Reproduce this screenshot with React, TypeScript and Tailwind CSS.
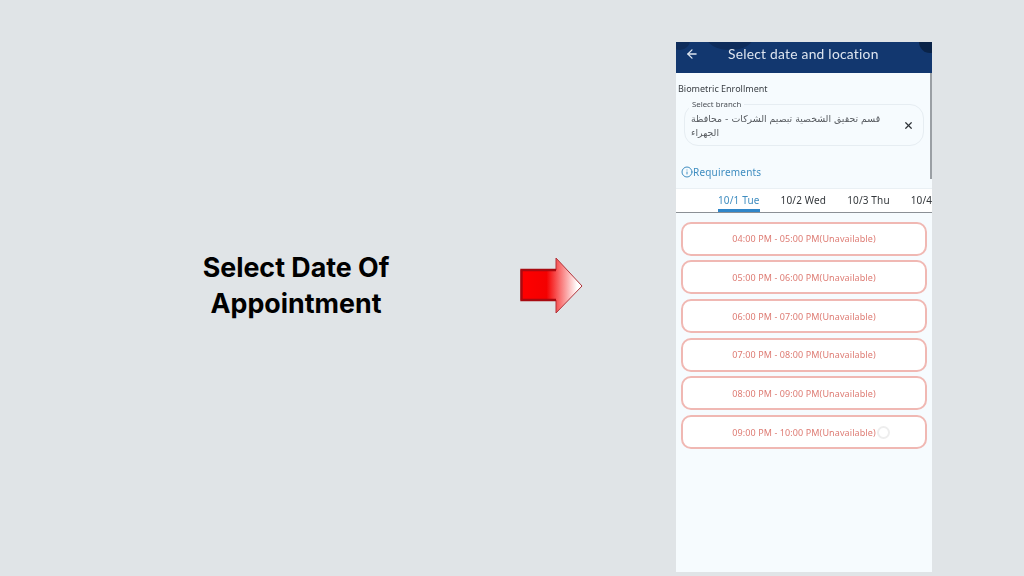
import { ArrowLeft, Info, X } from 'lucide-react';

const slots = [
  '04:00 PM - 05:00 PM(Unavailable)',
  '05:00 PM - 06:00 PM(Unavailable)',
  '06:00 PM - 07:00 PM(Unavailable)',
  '07:00 PM - 08:00 PM(Unavailable)',
  '08:00 PM - 09:00 PM(Unavailable)',
  '09:00 PM - 10:00 PM(Unavailable)',
];

const tabs = ['10/1 Tue', '10/2 Wed', '10/3 Thu', '10/4 Fri'];

function RedArrow() {
  return (
    <svg width="64" height="58" viewBox="0 0 64 58" className="shrink-0">
      <defs>
        <linearGradient id="fade" x1="0" y1="0" x2="1" y2="0">
          <stop offset="0" stopColor="#ff0000" />
          <stop offset="0.42" stopColor="#f40000" />
          <stop offset="0.92" stopColor="#ffffff" />
        </linearGradient>
      </defs>
      <path
        d="M1 13 H36 V1 L62 29 L36 56 V43 H1 Z"
        fill="url(#fade)"
        stroke="#b0333a"
        strokeWidth="1"
      />
      <path
        d="M36 13 H1.5 V43 H36"
        fill="none"
        stroke="#a80a10"
        strokeWidth="2.4"
      />
    </svg>
  );
}

export default function App() {
  return (
    <div className="flex h-[576px] w-[1024px] overflow-hidden bg-[#e0e4e7] font-['Noto_Sans',sans-serif]">
      <div className="flex w-[520px] items-center justify-center pb-[6px] pl-[72px]">
        <h1 className="text-center font-['Inter',sans-serif] text-[26.8px] leading-[36px] font-bold text-black">
          Select Date Of
          <br />
          Appointment
        </h1>
      </div>

      <div className="flex items-center pb-[4px]">
        <RedArrow />
      </div>

      <div className="mt-[42px] ml-[92px] flex h-[530px] w-[256px] flex-col bg-[#f6fbfe] blur-[0.5px]">
        <header className="relative flex h-[31px] shrink-0 items-center overflow-hidden bg-[#12376f] pb-[7px] text-[#dfe6f0]">
          <svg
            className="absolute inset-0"
            width="256"
            height="31"
            viewBox="0 0 256 31"
          >
            <ellipse cx="54" cy="-6" rx="24" ry="14" fill="#0e2c5b" />
            <circle cx="4" cy="-2" r="10" fill="#0e2c5b" />
            <circle cx="254" cy="0" r="11" fill="#0a2348" />
          </svg>
          <ArrowLeft size={14} strokeWidth={2.2} className="relative ml-[9px]" />
          <span className="relative ml-[29px] font-['Lato',sans-serif] text-[13.8px] leading-none tracking-[0.25px]">
            Select date and location
          </span>
        </header>

        <div className="border-r-2 border-[#9a9fa4] pt-[9px] pl-[2px]">
          <p className="text-[9px] leading-[13px] text-[#3a3f44]">
            Biometric Enrollment
          </p>
          <div className="relative mt-[9px] ml-[6px] flex h-[42px] w-[240px] items-center rounded-[14px] border border-[#e6edf2] pr-[9px] pl-[6px]">
            <span className="absolute -top-[6px] left-[4px] bg-[#f6fbfe] px-[3px] text-[7.8px] leading-[10px] text-[#4a4f55]">
              Select branch
            </span>
            <p
              dir="rtl"
              className="mt-[2px] w-[196px] text-left font-['DejaVu_Sans',sans-serif] text-[9.4px] leading-[14px] text-[#55595e]"
            >
              قسم تحقيق الشخصية تبصيم الشركات - محافظة الجهراء
            </p>
            <X size={11} strokeWidth={2.6} className="ml-auto text-[#2d3136]" />
          </div>
          <div className="mt-[19px] flex items-center pl-[3px] text-[#3f8dc0]">
            <Info size={12} strokeWidth={2} />
            <span className="text-[10px] leading-[14px] tracking-[0.2px]">
              Requirements
            </span>
          </div>
        </div>

        <nav className="mt-[9px] flex h-[25px] shrink-0 gap-[21px] overflow-hidden border-t border-b border-t-[#eaf0f4] border-b-[#8b9095] bg-white pl-[42px]">
          {tabs.map((tab, i) => (
            <span
              key={tab}
              className={
                i === 0
                  ? 'shrink-0 border-b-[3px] border-[#2f86c9] text-[10px] leading-[22px] tracking-[0.15px] text-[#3f8dc0]'
                  : 'shrink-0 text-[10px] leading-[22px] tracking-[0.15px] text-[#33373b]'
              }
            >
              {tab}
            </span>
          ))}
        </nav>

        <div className="flex flex-col gap-[4.7px] pt-[8.6px] pl-[5px]">
          {slots.map((slot, i) => (
            <div
              key={slot}
              className="relative flex h-[34px] w-[246px] items-center justify-center rounded-[10px] border-2 border-[#f0b8b3] bg-white pt-[1px] text-[9px] tracking-[0.1px] text-[#de7c74]"
            >
              {slot}
              {i === 5 && (
                <span className="absolute top-[9px] left-[194px] size-[13px] rounded-full border-2 border-[#eeeeee]" />
              )}
            </div>
          ))}
        </div>
      </div>
    </div>
  );
}
